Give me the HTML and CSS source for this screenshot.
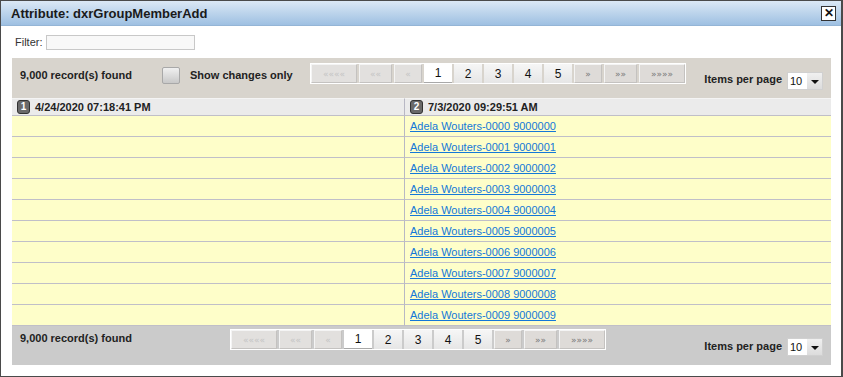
FILE: index.html
```html
<!DOCTYPE html>
<html lang="en">
<head>
    <meta charset="UTF-8">
    <title>Attribute: dxrGroupMemberAdd</title>
    <link rel="stylesheet" href="styles.css">
</head>
<body>
    <div class="window">
        <div class="titlebar">
            <span class="title">Attribute: dxrGroupMemberAdd</span>
            <span class="close">&#x2715;</span>
        </div>

        <div class="filter-row">
            <label for="filter">Filter:</label>
            <input type="text" id="filter" class="filter-input">
        </div>

        <div class="panel">
            <div class="bar bar-top">
                <div class="records">9,000 record(s) found</div>
                <div class="checkbox"></div>
                <div class="changes">Show changes only</div>
                <div class="pager">
                    <span class="pbtn off w-wide">&laquo;&laquo;&laquo;&laquo;</span>
                    <span class="pbtn off w-mid">&laquo;&laquo;</span>
                    <span class="pbtn off">&laquo;</span>
                    <span class="pnum current">1</span>
                    <span class="pnum">2</span>
                    <span class="pnum">3</span>
                    <span class="pnum">4</span>
                    <span class="pnum">5</span>
                    <span class="pbtn">&raquo;</span>
                    <span class="pbtn w-mid">&raquo;&raquo;</span>
                    <span class="pbtn w-wide">&raquo;&raquo;&raquo;&raquo;</span>
                </div>
                <div class="per-page">
                    <span class="per-label">Items per page</span>
                    <span class="select"><span class="select-val">10</span><span class="select-arrow"></span></span>
                </div>
            </div>

            <div class="grid">
                <div class="hcell"><span class="badge">1</span>4/24/2020 07:18:41 PM</div>
                <div class="hcell right"><span class="badge">2</span>7/3/2020 09:29:51 AM</div>

                <div class="cell"></div><div class="cell right"><a href="#">Adela Wouters-0000 9000000</a></div>
                <div class="cell"></div><div class="cell right"><a href="#">Adela Wouters-0001 9000001</a></div>
                <div class="cell"></div><div class="cell right"><a href="#">Adela Wouters-0002 9000002</a></div>
                <div class="cell"></div><div class="cell right"><a href="#">Adela Wouters-0003 9000003</a></div>
                <div class="cell"></div><div class="cell right"><a href="#">Adela Wouters-0004 9000004</a></div>
                <div class="cell"></div><div class="cell right"><a href="#">Adela Wouters-0005 9000005</a></div>
                <div class="cell"></div><div class="cell right"><a href="#">Adela Wouters-0006 9000006</a></div>
                <div class="cell"></div><div class="cell right"><a href="#">Adela Wouters-0007 9000007</a></div>
                <div class="cell"></div><div class="cell right"><a href="#">Adela Wouters-0008 9000008</a></div>
                <div class="cell"></div><div class="cell right"><a href="#">Adela Wouters-0009 9000009</a></div>
            </div>

            <div class="bar bar-bottom">
                <div class="records">9,000 record(s) found</div>
                <div class="pager">
                    <span class="pbtn off w-wide">&laquo;&laquo;&laquo;&laquo;</span>
                    <span class="pbtn off w-mid">&laquo;&laquo;</span>
                    <span class="pbtn off">&laquo;</span>
                    <span class="pnum current">1</span>
                    <span class="pnum">2</span>
                    <span class="pnum">3</span>
                    <span class="pnum">4</span>
                    <span class="pnum">5</span>
                    <span class="pbtn">&raquo;</span>
                    <span class="pbtn w-mid">&raquo;&raquo;</span>
                    <span class="pbtn w-wide">&raquo;&raquo;&raquo;&raquo;</span>
                </div>
                <div class="per-page">
                    <span class="per-label">Items per page</span>
                    <span class="select"><span class="select-val">10</span><span class="select-arrow"></span></span>
                </div>
            </div>
        </div>
    </div>
</body>
</html>
```

FILE: styles.css
```css
body {
    margin: 0;
    font-family: "Liberation Sans", Arial, sans-serif;
    font-size: 11px;
    color: #222;
    background: #fff;
}
.window {
    width: 843px;
    height: 377px;
    box-sizing: border-box;
    border: 1px solid #4a4a4a;
    border-right-width: 2px;
    background: #fff;
}
.titlebar {
    height: 24px;
    display: flex;
    align-items: center;
    justify-content: space-between;
    padding: 0 5px 0 10px;
    background: linear-gradient(#dbe8f5, #9ec0e2);
    border-bottom: 1px solid #94b5d6;
}
.title {
    font-size: 13px;
    font-weight: bold;
    color: #1a1a1a;
}
.close {
    width: 13px;
    height: 13px;
    border: 1px solid #333;
    background: #fff;
    font-size: 12px;
    font-weight: bold;
    line-height: 13px;
    text-align: center;
    color: #111;
}
.filter-row {
    display: flex;
    align-items: center;
    height: 32px;
    padding-left: 14px;
}
.filter-row label {
    color: #333;
    margin-right: 3px;
}
.filter-input {
    width: 149px;
    height: 15px;
    box-sizing: border-box;
    border: 1px solid #c8c8c8;
    background: #f8f8f8;
    padding: 0;
    margin-top: 1px;
}
.panel {
    margin: 0 10px 0 11px;
}
.bar {
    display: flex;
    align-items: flex-start;
    padding: 0 8px;
}
.bar-top {
    height: 40px;
    background: #d8d4cd;
}
.bar-bottom {
    height: 39px;
    background: #cbcbcb;
}
.records {
    color: #222;
    font-weight: bold;
    line-height: 14px;
}
.bar-top .records {
    width: 142px;
    margin-top: 10px;
}
.bar-bottom .records {
    width: 210px;
    margin-top: 5px;
}
.checkbox {
    width: 16px;
    height: 15px;
    margin-top: 9px;
    border: 1px solid #a8a8a8;
    border-radius: 2px;
    background: linear-gradient(#f0f0f0, #c8c8c8);
}
.changes {
    font-weight: bold;
    line-height: 14px;
    margin: 10px 0 0 10px;
    width: 120px;
}
.pager {
    display: flex;
    gap: 2px;
    border: 1px solid #fff;
    height: 19px;
}
.bar-top .pager {
    margin-top: 5px;
}
.bar-bottom .pager {
    margin-top: 3px;
}
.pbtn, .pnum {
    width: 28px;
    height: 19px;
    box-sizing: border-box;
    display: flex;
    align-items: center;
    justify-content: center;
}
.pbtn {
    font-family: "DejaVu Sans", sans-serif;
    font-size: 9px;
    color: #777;
    background: #dedbd8;
    border: 1px solid #c4c2c0;
    border-top-color: #f4f4f4;
    border-left-color: #f4f4f4;
}
.pbtn.off {
    color: #c4c4c4;
    background: #e2e0de;
}
.w-mid {
    width: 33px;
}
.w-wide {
    width: 46px;
}
.pnum {
    font-size: 12px;
    color: #111;
    background: linear-gradient(#f6f6f6, #e6e6e6);
}
.pnum.current {
    background: #fff;
    border-bottom: 1px solid #a8a8a8;
}
.per-page {
    margin-left: auto;
    display: flex;
    align-items: flex-start;
}
.per-label {
    font-weight: bold;
    line-height: 14px;
    margin-right: 5px;
}
.bar-top .per-label {
    margin-top: 14px;
}
.bar-bottom .per-label {
    margin-top: 13px;
}
.select {
    display: flex;
    width: 36px;
    height: 18px;
    box-sizing: border-box;
    border: 1px solid #d0d0d0;
    background: #fff;
}
.bar-top .select {
    margin-top: 14px;
}
.bar-bottom .select {
    margin-top: 12px;
}
.select-val {
    flex: 1;
    font-size: 11px;
    line-height: 16px;
    padding-left: 2px;
    color: #111;
}
.select-arrow {
    width: 15px;
    background: linear-gradient(#f0f0f0, #dcdcdc);
    position: relative;
}
.select-arrow::after {
    content: "";
    position: absolute;
    left: 4px;
    top: 7px;
    border-left: 4px solid transparent;
    border-right: 4px solid transparent;
    border-top: 4px solid #111;
}
.grid {
    display: grid;
    grid-template-columns: 392px 1fr;
    background: #fefec9;
}
.hcell {
    height: 16px;
    display: flex;
    align-items: center;
    padding-left: 5px;
    background: #ebebeb;
    border-top: 1px solid #f4f4f4;
    border-bottom: 1px solid #c0bfc8;
    font-weight: bold;
    color: #222;
}
.cell {
    height: 20px;
    border-bottom: 1px solid #c0bfc8;
    padding-left: 5px;
    display: flex;
    align-items: center;
}
.right {
    border-left: 1px solid #b8b8c4;
}
.badge {
    width: 11px;
    height: 12px;
    border: 1px solid #333;
    border-radius: 3px;
    background: #6a6a6a;
    color: #fff;
    font-size: 10px;
    font-weight: bold;
    line-height: 12px;
    text-align: center;
    margin-right: 5px;
}
.cell a {
    color: #1478d8;
    text-decoration: underline;
}
```
